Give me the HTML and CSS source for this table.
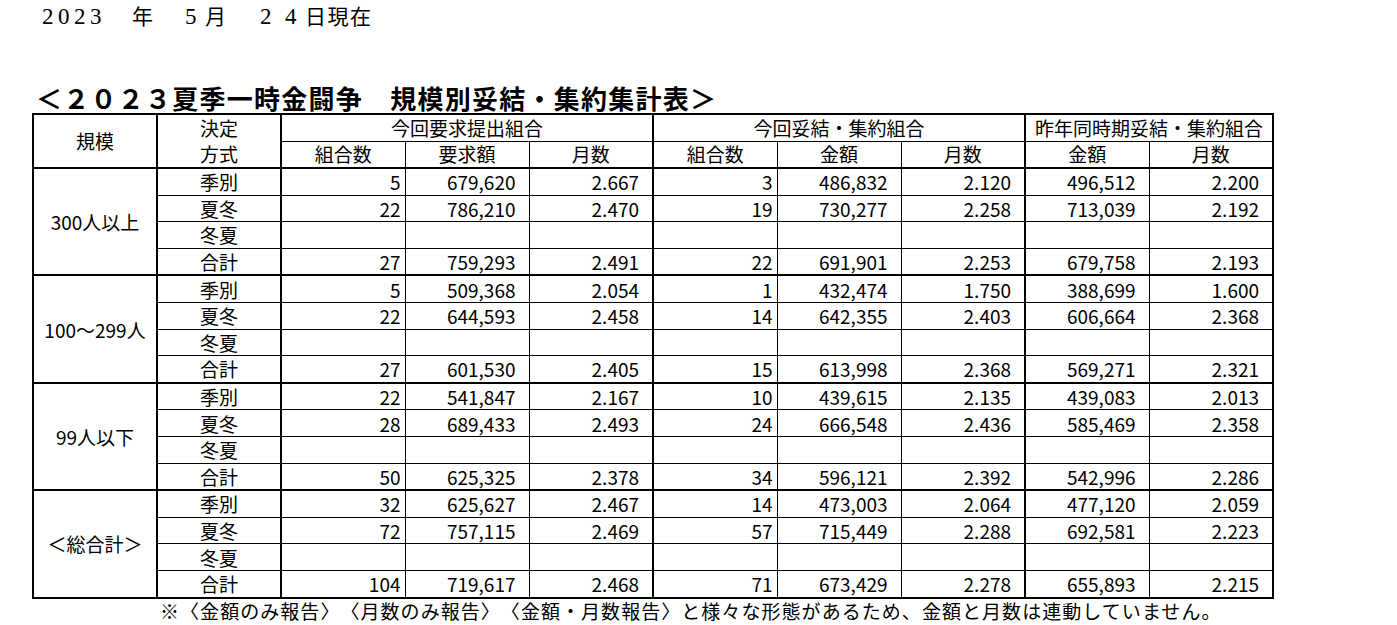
FILE: index.html
```html
<!DOCTYPE html>
<html lang="ja">
<head>
<meta charset="utf-8">
<title>規模別妥結・集約集計表</title>
<link rel="stylesheet" href="styles.css">
</head>
<body>
<div class="date">
  <span class="dg">2</span><span class="dg">0</span><span class="dg">2</span><span class="dg">3</span><span class="dk k-year">年</span><span class="dg d-m">5</span><span class="dk k-month">月</span><span class="dg d-day">2</span><span class="dg d-day2">4</span><span class="dk k-rest">日現在</span>
</div>
<h1 class="title">＜２０２３夏季一時金闘争　規模別妥結・集約集計表＞</h1>
<table class="sum">
  <colgroup>
    <col class="c"><col class="c"><col class="c"><col class="c"><col class="c"><col class="c"><col class="c"><col class="c"><col class="c"><col class="c">
  </colgroup>
  <thead>
    <tr>
      <th rowspan="2" class="scale">規模</th>
      <th rowspan="2" class="kind two">決定<br>方式</th>
      <th colspan="3" class="grp">今回要求提出組合</th>
      <th colspan="3" class="grp">今回妥結・集約組合</th>
      <th colspan="2" class="grp last">昨年同時期妥結・集約組合</th>
    </tr>
    <tr class="sub">
      <th>組合数</th><th>要求額</th><th class="gend">月数</th>
      <th>組合数</th><th>金額</th><th class="gend">月数</th>
      <th>金額</th><th>月数</th>
    </tr>
  </thead>
  <tbody class="group">
    <tr><td rowspan="4" class="scale">300人以上</td><td class="kind">季別</td><td class="cnt">5</td><td class="num">679,620</td><td class="num gend">2.667</td><td class="cnt">3</td><td class="num">486,832</td><td class="num gend">2.120</td><td class="num">496,512</td><td class="num">2.200</td></tr>
    <tr class="dot"><td class="kind">夏冬</td><td class="cnt">22</td><td class="num">786,210</td><td class="num gend">2.470</td><td class="cnt">19</td><td class="num">730,277</td><td class="num gend">2.258</td><td class="num">713,039</td><td class="num">2.192</td></tr>
    <tr class="dot"><td class="kind">冬夏</td><td class="cnt"></td><td class="num"></td><td class="num gend"></td><td class="cnt"></td><td class="num"></td><td class="num gend"></td><td class="num"></td><td class="num"></td></tr>
    <tr class="dot"><td class="kind">合計</td><td class="cnt">27</td><td class="num">759,293</td><td class="num gend">2.491</td><td class="cnt">22</td><td class="num">691,901</td><td class="num gend">2.253</td><td class="num">679,758</td><td class="num">2.193</td></tr>
  </tbody>
  <tbody class="group">
    <tr><td rowspan="4" class="scale">100～299人</td><td class="kind">季別</td><td class="cnt">5</td><td class="num">509,368</td><td class="num gend">2.054</td><td class="cnt">1</td><td class="num">432,474</td><td class="num gend">1.750</td><td class="num">388,699</td><td class="num">1.600</td></tr>
    <tr class="dot"><td class="kind">夏冬</td><td class="cnt">22</td><td class="num">644,593</td><td class="num gend">2.458</td><td class="cnt">14</td><td class="num">642,355</td><td class="num gend">2.403</td><td class="num">606,664</td><td class="num">2.368</td></tr>
    <tr class="dot"><td class="kind">冬夏</td><td class="cnt"></td><td class="num"></td><td class="num gend"></td><td class="cnt"></td><td class="num"></td><td class="num gend"></td><td class="num"></td><td class="num"></td></tr>
    <tr class="dot"><td class="kind">合計</td><td class="cnt">27</td><td class="num">601,530</td><td class="num gend">2.405</td><td class="cnt">15</td><td class="num">613,998</td><td class="num gend">2.368</td><td class="num">569,271</td><td class="num">2.321</td></tr>
  </tbody>
  <tbody class="group">
    <tr><td rowspan="4" class="scale">99人以下</td><td class="kind">季別</td><td class="cnt">22</td><td class="num">541,847</td><td class="num gend">2.167</td><td class="cnt">10</td><td class="num">439,615</td><td class="num gend">2.135</td><td class="num">439,083</td><td class="num">2.013</td></tr>
    <tr class="dot"><td class="kind">夏冬</td><td class="cnt">28</td><td class="num">689,433</td><td class="num gend">2.493</td><td class="cnt">24</td><td class="num">666,548</td><td class="num gend">2.436</td><td class="num">585,469</td><td class="num">2.358</td></tr>
    <tr class="dot"><td class="kind">冬夏</td><td class="cnt"></td><td class="num"></td><td class="num gend"></td><td class="cnt"></td><td class="num"></td><td class="num gend"></td><td class="num"></td><td class="num"></td></tr>
    <tr class="dot"><td class="kind">合計</td><td class="cnt">50</td><td class="num">625,325</td><td class="num gend">2.378</td><td class="cnt">34</td><td class="num">596,121</td><td class="num gend">2.392</td><td class="num">542,996</td><td class="num">2.286</td></tr>
  </tbody>
  <tbody class="group">
    <tr><td rowspan="4" class="scale">＜総合計＞</td><td class="kind">季別</td><td class="cnt">32</td><td class="num">625,627</td><td class="num gend">2.467</td><td class="cnt">14</td><td class="num">473,003</td><td class="num gend">2.064</td><td class="num">477,120</td><td class="num">2.059</td></tr>
    <tr class="dot"><td class="kind">夏冬</td><td class="cnt">72</td><td class="num">757,115</td><td class="num gend">2.469</td><td class="cnt">57</td><td class="num">715,449</td><td class="num gend">2.288</td><td class="num">692,581</td><td class="num">2.223</td></tr>
    <tr class="dot"><td class="kind">冬夏</td><td class="cnt"></td><td class="num"></td><td class="num gend"></td><td class="cnt"></td><td class="num"></td><td class="num gend"></td><td class="num"></td><td class="num"></td></tr>
    <tr class="dot"><td class="kind">合計</td><td class="cnt">104</td><td class="num">719,617</td><td class="num gend">2.468</td><td class="cnt">71</td><td class="num">673,429</td><td class="num gend">2.278</td><td class="num">655,893</td><td class="num">2.215</td></tr>
  </tbody>
</table>
<p class="note">※〈金額のみ報告〉〈月数のみ報告〉〈金額・月数報告〉と様々な形態があるため、金額と月数は連動していません。</p>
</body>
</html>
```
FILE: styles.css
```css
html, body {
  margin: 0;
  padding: 0;
  background: #fff;
  color: #000;
}

body {
  font-family: "Noto Sans CJK JP", sans-serif;
  text-spacing-trim: space-all;
}

.date {
  height: 30px;
  padding-left: 42px;
  line-height: 30px;
  white-space: nowrap;
}

.dg {
  display: inline-block;
  font-family: "Liberation Serif", serif;
  font-size: 23px;
  width: 16px;
}

.dk {
  display: inline-block;
  font-family: "Noto Sans CJK JP", sans-serif;
  font-size: 21px;
}

.k-year { margin-left: 26px; }
.d-m { margin-left: 32px; width: 11px; }
.k-month { margin-left: 9px; }
.d-day { margin-left: 34px; width: 25px; }
.d-day2 { width: 11px; }
.k-rest { margin-left: 9px; letter-spacing: 1.5px; }

.title {
  margin: 54px 0 1px 36px;
  font-size: 26px;
  line-height: 28px;
  font-weight: 700;
  letter-spacing: 1.25px;
  white-space: nowrap;
}

.sum {
  margin-left: 32px;
  border-collapse: collapse;
  table-layout: fixed;
  width: 1240px;
  border: 2px solid #000;
  font-size: 19px;
  font-weight: 400;
}

.sum col.c {
  width: 124px;
}

.sum th,
.sum td {
  padding: 0;
  border: 1px solid #000;
  font-weight: 400;
  white-space: nowrap;
  overflow: hidden;
}

.sum th {
  height: 24px;
  line-height: 24px;
  text-align: center;
}

.sum td {
  height: 25.6px;
  line-height: 25px;
}

.sum th.scale,
.sum td.scale {
  border-right: 2px solid #000;
  text-align: center;
}

.sum th.kind,
.sum td.kind {
  border-right: 2px solid #000;
  text-align: center;
}

.sum th.two {
  line-height: 26px;
}

.sum th.grp {
  border-left: 2px solid #000;
  border-right: 2px solid #000;
}

.sum tr.sub th {
  border-bottom: 2px solid #000;
}

.sum .gend {
  border-right: 2px solid #000;
}

.sum td.cnt {
  text-align: right;
  padding-right: 4px;
}

.sum td.num {
  text-align: right;
  padding-right: 13px;
}

.sum tbody.group {
  border-top: 2px solid #000;
}

.sum tr.dot td {
  border-top: 1px dotted #000;
}

.note {
  margin: 0;
  padding-left: 160px;
  font-size: 19px;
  line-height: 24px;
  letter-spacing: 1.05px;
  white-space: nowrap;
}
```
